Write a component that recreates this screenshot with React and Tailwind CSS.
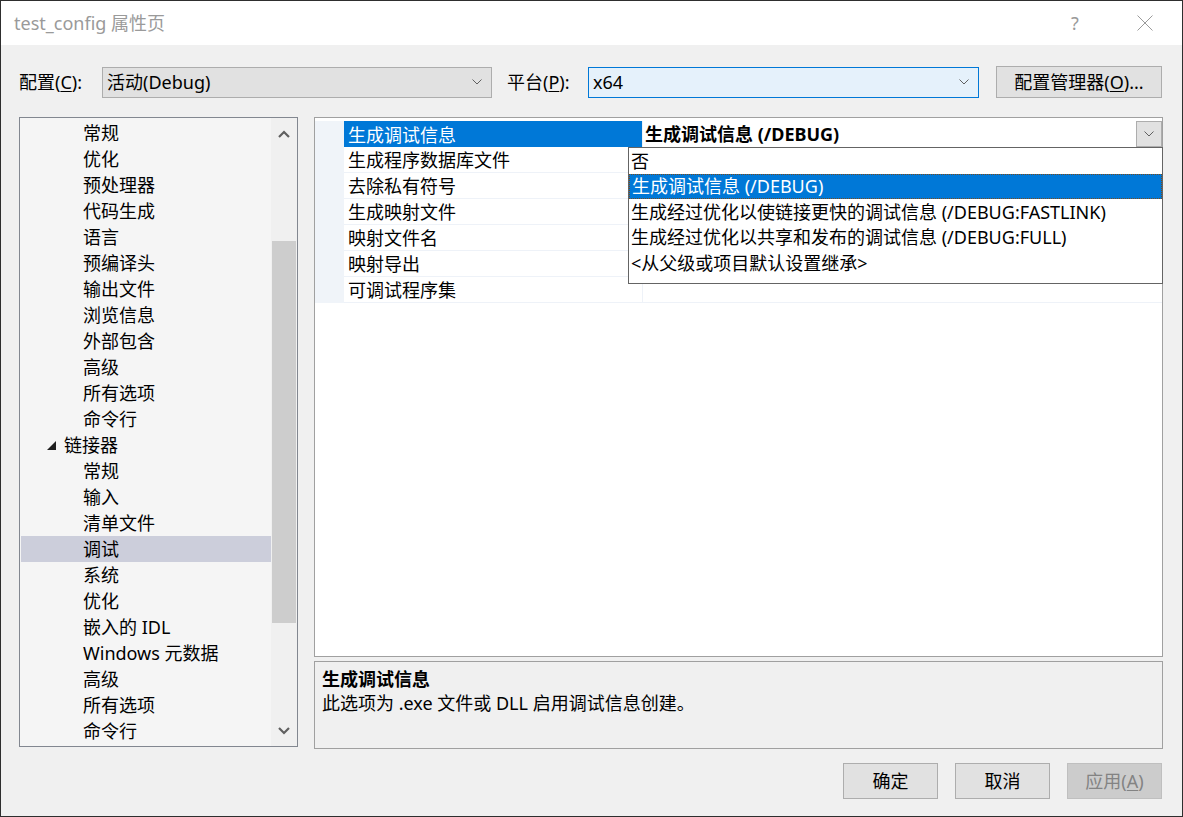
import React from "react";

const FONT = "font-['Noto_Sans','Noto_Sans_CJK_SC',sans-serif]";

function ChevDown({ className = "" }) {
  return (
    <svg width="10" height="6" viewBox="0 0 10 6" className={className}>
      <path d="M0.5 0.5 L5 5 L9.5 0.5" fill="none" stroke="#606060" strokeWidth="1" />
    </svg>
  );
}

function BoldChev({ up }) {
  return (
    <svg width="12" height="8" viewBox="0 0 12 8">
      <path
        d={up ? "M1 7 L6 2 L11 7" : "M1 1 L6 6 L11 1"}
        fill="none"
        stroke="#606060"
        strokeWidth="2.2"
      />
    </svg>
  );
}

const tree = [
  { t: "常规" },
  { t: "优化" },
  { t: "预处理器" },
  { t: "代码生成" },
  { t: "语言" },
  { t: "预编译头" },
  { t: "输出文件" },
  { t: "浏览信息" },
  { t: "外部包含" },
  { t: "高级" },
  { t: "所有选项" },
  { t: "命令行" },
  { t: "链接器", parent: true },
  { t: "常规" },
  { t: "输入" },
  { t: "清单文件" },
  { t: "调试", sel: true },
  { t: "系统" },
  { t: "优化" },
  { t: "嵌入的 IDL" },
  { t: "Windows 元数据" },
  { t: "高级" },
  { t: "所有选项" },
  { t: "命令行" },
];

const props = [
  "生成调试信息",
  "生成程序数据库文件",
  "去除私有符号",
  "生成映射文件",
  "映射文件名",
  "映射导出",
  "可调试程序集",
];

const options = [
  "否",
  "生成调试信息 (/DEBUG)",
  "生成经过优化以使链接更快的调试信息 (/DEBUG:FASTLINK)",
  "生成经过优化以共享和发布的调试信息 (/DEBUG:FULL)",
  "<从父级或项目默认设置继承>",
];

export default function App() {
  return (
    <div
      className={`${FONT} w-[1183px] h-[817px] flex flex-col bg-[#f0f0f0] border border-[#2e2e2e] text-black overflow-hidden`}
    >
      {/* Title bar */}
      <div className="h-[44px] bg-white flex items-center shrink-0">
        <div className="pl-[13px] text-[18px] text-[#9a9a9a] flex-1 leading-none">test_config 属性页</div>
        <div className="w-[66px] text-center text-[18px] text-[#9a9a9a] leading-none">?</div>
        <div className="w-[74px] flex justify-center">
          <svg width="16" height="16" viewBox="0 0 16 16">
            <path d="M0.5 0.5 L15.5 15.5 M15.5 0.5 L0.5 15.5" stroke="#9a9a9a" strokeWidth="1" />
          </svg>
        </div>
      </div>

      {/* Top row */}
      <div className="flex items-center pl-[18px] pt-[21px] shrink-0">
        <div className="w-[83px] text-[18px] leading-none">
          配置(<span className="underline underline-offset-2">C</span>):
        </div>
        <div className="w-[390px] h-[31px] bg-[#e1e1e1] border border-[#adadad] flex items-center pl-[4px] pr-[9px]">
          <span className="flex-1 text-[18px] leading-none">活动(Debug)</span>
          <ChevDown />
        </div>
        <div className="w-[81px] ml-[15px] text-[18px] leading-none">
          平台(<span className="underline underline-offset-2">P</span>):
        </div>
        <div className="w-[391px] h-[31px] bg-[#e5f1fb] border border-[#0078d7] flex items-center pl-[4px] pr-[9px]">
          <span className="flex-1 text-[18px] leading-none">x64</span>
          <ChevDown />
        </div>
        <div className="w-[166px] h-[32px] ml-[17px] bg-[#e1e1e1] border border-[#adadad] flex items-center justify-center text-[18px] leading-none">
          配置管理器(<span className="underline underline-offset-2">O</span>)...
        </div>
      </div>

      {/* Main */}
      <div className="flex pl-[18px] pt-[19px] gap-[16px] shrink-0">
        {/* Tree */}
        <div className="w-[279px] h-[630px] border border-[#828790] bg-[#f5f5f5] flex">
          <div className="flex-1 pt-[2px] pl-[1px]">
            {tree.map((it, i) => (
              <div
                key={i}
                className={`h-[26px] flex items-center text-[18px] leading-none ${
                  it.sel ? "bg-[#cccedb]" : ""
                } ${it.parent ? "pl-[26px]" : "pl-[62px]"}`}
              >
                {it.parent && (
                  <svg width="9" height="9" viewBox="0 0 9 9" className="mr-[8px]">
                    <path d="M9 0 L9 9 L0 9 Z" fill="#1e1e1e" />
                  </svg>
                )}
                {it.t}
              </div>
            ))}
          </div>
          <div className="w-[26px] bg-[#f0f0f0] flex flex-col">
            <div className="h-[30px] flex items-center justify-center pt-[2px]">
              <BoldChev up />
            </div>
            <div className="h-[93px]" />
            <div className="h-[382px] px-[1px]">
              <div className="h-full bg-[#cdcdcd]" />
            </div>
            <div className="flex-1" />
            <div className="h-[30px] flex items-center justify-center">
              <BoldChev />
            </div>
          </div>
        </div>

        {/* Right column */}
        <div className="w-[849px] flex flex-col gap-[4px]">
          <div className="h-[540px] border border-[#a0a0a0] bg-white relative">
            <div className="pt-[3px] flex flex-col">
              {props.map((p, i) => (
                <div key={i} className="h-[26px] flex">
                  <div className="w-[29px] bg-[#f0f4f9]" />
                  <div
                    className={`w-[298px] flex items-center pl-[4px] pt-[1px] text-[18px] leading-none ${
                      i === 0 ? "bg-[#0078d7] text-white" : "border-b border-[#eef2f8]"
                    }`}
                  >
                    {p}
                  </div>
                  <div
                    className={`flex-1 flex items-center border-l border-[#eef2f8] ${
                      i === 0 ? "" : "border-b"
                    }`}
                  >
                    {i === 0 && (
                      <>
                        <span className="flex-1 pl-[2px] text-[18px] font-bold leading-none">
                          生成调试信息 (/DEBUG)
                        </span>
                        <div className="w-[26px] h-[26px] bg-[#e1e1e1] border border-[#adadad] flex items-center justify-center">
                          <ChevDown />
                        </div>
                      </>
                    )}
                  </div>
                </div>
              ))}
            </div>

            {/* Dropdown popup */}
            <div className="absolute left-[313px] top-[29px] w-[535px] h-[137px] bg-white border border-[#646464]">
              {options.map((o, i) => (
                <div
                  key={i}
                  className={`h-[25.5px] flex items-center pl-[2px] text-[18px] leading-none ${
                    i === 1 ? "bg-[#0078d7] text-white border border-dotted border-[#7a4a1a]" : ""
                  }`}
                >
                  {o}
                </div>
              ))}
            </div>
          </div>

          {/* Description */}
          <div className="h-[88px] border border-[#a0a0a0] bg-[#f0f0f0] pl-[7px] pt-[6px]">
            <div className="text-[18px] font-bold leading-[22px]">生成调试信息</div>
            <div className="text-[18px] leading-[26px]">此选项为 .exe 文件或 DLL 启用调试信息创建。</div>
          </div>
        </div>
      </div>

      {/* Buttons */}
      <div className="flex justify-end gap-[17px] pr-[20px] pt-[14px] shrink-0">
        <div className="w-[95px] h-[36px] bg-[#e1e1e1] border border-[#adadad] flex items-center justify-center text-[18px] leading-none">
          确定
        </div>
        <div className="w-[95px] h-[36px] bg-[#e1e1e1] border border-[#adadad] flex items-center justify-center text-[18px] leading-none">
          取消
        </div>
        <div className="w-[95px] h-[36px] bg-[#cccccc] border border-[#bfbfbf] flex items-center justify-center text-[18px] leading-none text-[#838383]">
          应用(<span className="underline underline-offset-2">A</span>)
        </div>
      </div>
    </div>
  );
}
